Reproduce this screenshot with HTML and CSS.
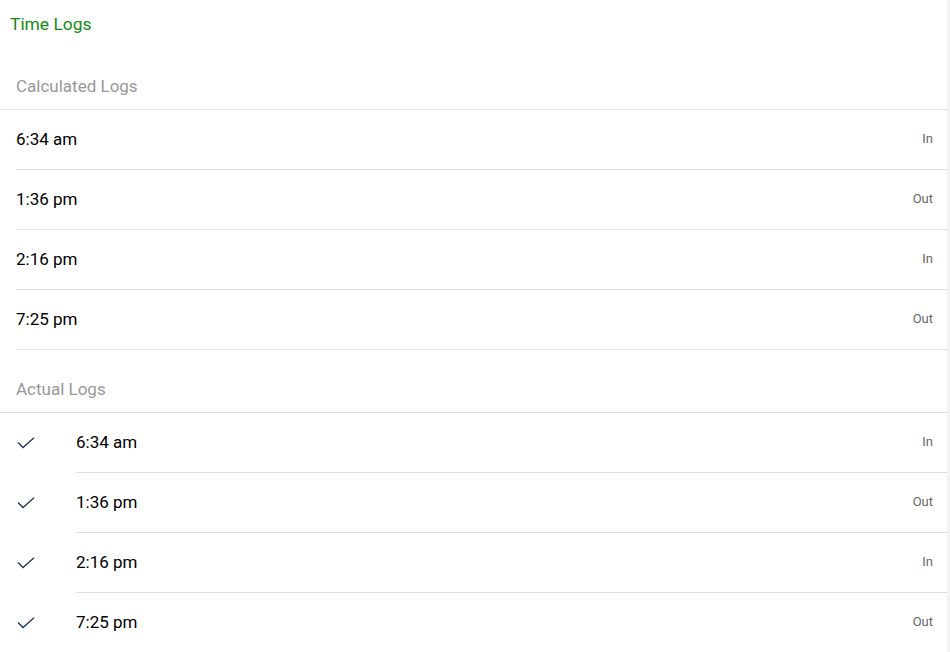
FILE: index.html
```html
<!DOCTYPE html>
<html>
<head>
<meta charset="utf-8">
<link rel="stylesheet" href="styles.css">
</head>
<body>
<div class="page">
  <div class="content">
    <div class="title">Time Logs</div>
    <div class="header first">Calculated Logs</div>
    <div class="list inset">
      <div class="row"><span class="time">6:34 am</span><span class="tag">In</span></div>
      <div class="row"><span class="time">1:36 pm</span><span class="tag">Out</span></div>
      <div class="row"><span class="time">2:16 pm</span><span class="tag">In</span></div>
      <div class="row"><span class="time">7:25 pm</span><span class="tag">Out</span></div>
    </div>
    <div class="header second">Actual Logs</div>
    <div class="list">
      <div class="arow"><svg class="check" viewBox="0 0 18 12" width="18" height="12"><polyline points="1,5.5 6,10.5 17,0.8" fill="none" stroke="#1f3550" stroke-width="1.3"/></svg><div class="row"><span class="time">6:34 am</span><span class="tag">In</span></div></div>
      <div class="arow"><svg class="check" viewBox="0 0 18 12" width="18" height="12"><polyline points="1,5.5 6,10.5 17,0.8" fill="none" stroke="#1f3550" stroke-width="1.3"/></svg><div class="row"><span class="time">1:36 pm</span><span class="tag">Out</span></div></div>
      <div class="arow"><svg class="check" viewBox="0 0 18 12" width="18" height="12"><polyline points="1,5.5 6,10.5 17,0.8" fill="none" stroke="#1f3550" stroke-width="1.3"/></svg><div class="row"><span class="time">2:16 pm</span><span class="tag">In</span></div></div>
      <div class="arow"><svg class="check" viewBox="0 0 18 12" width="18" height="12"><polyline points="1,5.5 6,10.5 17,0.8" fill="none" stroke="#1f3550" stroke-width="1.3"/></svg><div class="row"><span class="time">7:25 pm</span><span class="tag">Out</span></div></div>
    </div>
  </div>
  <div class="scrollbar"></div>
</div>
</body>
</html>
```

FILE: styles.css
```css
html, body {
  margin: 0;
  padding: 0;
  background: #ffffff;
  font-family: Roboto, "Liberation Sans", sans-serif;
}
.page {
  display: flex;
  width: 950px;
  height: 652px;
  overflow: hidden;
}
.content {
  flex: 1;
  display: flex;
  flex-direction: column;
}
.scrollbar {
  width: 3px;
  background: #f1f1f6;
}
.title {
  flex: none;
  height: 49px;
  padding-left: 10px;
  font-size: 17.4px;
  line-height: 49px;
  color: #128a12;
}
.header {
  flex: none;
  box-sizing: border-box;
  padding-left: 16px;
  font-size: 17px;
  line-height: 20px;
  color: #999999;
  border-bottom: 1px solid #dedede;
}
.header.first {
  height: 61px;
  padding-top: 27px;
}
.header.second {
  height: 63px;
  padding-top: 29px;
}
.list {
  flex: none;
}
.list.inset {
  margin-left: 16px;
}
.row {
  flex: 1;
  height: 60px;
  box-sizing: border-box;
  display: flex;
  align-items: center;
  justify-content: space-between;
  padding-right: 14px;
  padding-bottom: 2px;
  border-bottom: 1px solid #dedede;
}
.time {
  font-size: 17px;
  color: #000000;
}
.tag {
  font-size: 13px;
  color: #666666;
}
.arow {
  display: flex;
  align-items: center;
}
.check {
  flex: none;
  width: 18px;
  height: 12px;
  margin: 0 41px 0 17px;
}
```
